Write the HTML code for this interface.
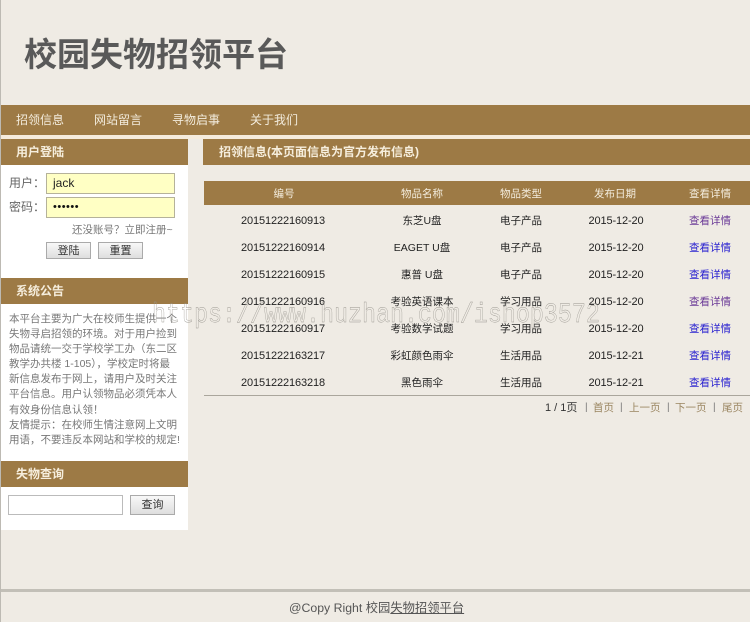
<!DOCTYPE html>
<html lang="zh"><head><meta charset="utf-8"><title>校园失物招领平台</title>
<style>
html,body{margin:0;padding:0}
body{width:750px;height:622px;position:relative;overflow:hidden;background:#efebe4;font-family:"Liberation Sans","Noto Sans CJK SC",sans-serif;font-size:12px;color:#222}
div,span,a{position:absolute;white-space:nowrap}
.bar{background:#9d7a45}
.h{color:#f6eedd;font-weight:bold;font-size:12px;line-height:26px}
.th{color:#f3ecdd;font-size:10.5px;line-height:25px;top:182px;text-align:center;transform:translateX(-50%)}
.nav{color:#f3ecdd;font-size:12px;line-height:30px;top:105px}
.c{text-align:center;line-height:20px;transform:translateX(-50%)}
.g{color:#666}
.inp{background:#ffffc4;border:1px solid #b5b29a;box-sizing:border-box;left:46px;width:129px;height:21px;line-height:19px;padding-left:6px;font-size:12px;color:#222}
.btn{background:linear-gradient(#f8f8f8,#dedede);border:1px solid #aaa;box-sizing:border-box;text-align:center;color:#333;font-size:11px}
.r{color:#222;font-size:10.5px}
.n{color:#222;font-size:11px;letter-spacing:-0.12px}
.lk{text-decoration:none;font-size:10.5px}
.p{color:#9a8560;font-size:10.5px;line-height:16px;top:400px}
.s{color:#777;font-size:10px;line-height:16px;top:400px}
</style></head><body>
<div style="left:0;top:0;width:1px;height:622px;background:#bdbab3"></div>
<div style="left:24px;top:33px;font-size:33px;font-weight:bold;color:#595959;line-height:44px">校园失物招领平台</div>

<div class="bar" style="left:1px;top:105px;width:749px;height:30px"></div>
<div style="left:1px;top:135px;width:749px;height:4px;background:#f5ebdc"></div>
<div class="nav" style="left:16px">招领信息</div>
<div class="nav" style="left:94px">网站留言</div>
<div class="nav" style="left:172px">寻物启事</div>
<div class="nav" style="left:250px">关于我们</div>

<div style="left:1px;top:139px;width:187px;height:391px;background:#fff"></div>
<div class="bar" style="left:1px;top:139px;width:187px;height:26px"></div>
<div class="h" style="left:16px;top:139px">用户登陆</div>
<div class="bar" style="left:203px;top:139px;width:547px;height:26px"></div>
<div class="h" style="left:219px;top:139px">招领信息(本页面信息为官方发布信息)</div>

<div class="g" style="left:9px;top:173px;line-height:20px;font-size:12px">用户：</div>
<div class="inp" style="top:173px">jack</div>
<div class="g" style="left:9px;top:197px;line-height:20px;font-size:12px">密码：</div>
<div class="inp" style="top:197px;font-size:11px;letter-spacing:0.5px;color:#111">••••••</div>
<div class="g" style="left:72px;top:222px;line-height:16px;font-size:10.5px;color:#777">还没账号？立即注册~</div>
<div class="btn" style="left:46px;top:242px;width:45px;height:17px;line-height:16px">登陆</div>
<div class="btn" style="left:98px;top:242px;width:45px;height:17px;line-height:16px">重置</div>

<div class="bar" style="left:1px;top:278px;width:187px;height:26px"></div>
<div class="h" style="left:16px;top:278px">系统公告</div>
<div style="left:9px;top:312px;width:176px;font-size:10.5px;line-height:15.1px;color:#777;white-space:normal">本平台主要为广大在校师生提供一个<br>失物寻启招领的环境。对于用户捡到<br>物品请统一交于学校学工办（东二区<br>教学办共楼 1-105），学校定时将最<br>新信息发布于网上，请用户及时关注<br>平台信息。用户认领物品必须凭本人<br>有效身份信息认领！<br>友情提示：在校师生情注意网上文明<br>用语，不要违反本网站和学校的规定!</div>

<div class="bar" style="left:1px;top:461px;width:187px;height:26px"></div>
<div class="h" style="left:16px;top:461px">失物查询</div>
<div style="left:8px;top:495px;width:115px;height:20px;box-sizing:border-box;background:#fff;border:1px solid #bbb"></div>
<div class="btn" style="left:130px;top:495px;width:45px;height:20px;line-height:19px">查询</div>

<div class="bar" style="left:204px;top:181px;width:546px;height:24px"></div>
<div class="th" style="left:284px">编号</div>
<div class="th" style="left:422px">物品名称</div>
<div class="th" style="left:521px">物品类型</div>
<div class="th" style="left:615px">发布日期</div>
<div class="th" style="left:710px">查看详情</div>

<div class="c n" style="left:283px;top:211px">20151222160913</div><div class="c r" style="left:422px;top:211px">东芝U盘</div><div class="c r" style="left:521px;top:211px">电子产品</div><div class="c n" style="left:616px;top:211px">2015-12-20</div><a class="c lk" style="left:710px;top:211px;color:#6b3a97">查看详情</a>
<div class="c n" style="left:283px;top:238px">20151222160914</div><div class="c r" style="left:422px;top:238px">EAGET U盘</div><div class="c r" style="left:521px;top:238px">电子产品</div><div class="c n" style="left:616px;top:238px">2015-12-20</div><a class="c lk" style="left:710px;top:238px;color:#2a22d0">查看详情</a>
<div class="c n" style="left:283px;top:265px">20151222160915</div><div class="c r" style="left:422px;top:265px">惠普 U盘</div><div class="c r" style="left:521px;top:265px">电子产品</div><div class="c n" style="left:616px;top:265px">2015-12-20</div><a class="c lk" style="left:710px;top:265px;color:#2a22d0">查看详情</a>
<div class="c n" style="left:283px;top:292px">20151222160916</div><div class="c r" style="left:422px;top:292px">考验英语课本</div><div class="c r" style="left:521px;top:292px">学习用品</div><div class="c n" style="left:616px;top:292px">2015-12-20</div><a class="c lk" style="left:710px;top:292px;color:#6b3a97">查看详情</a>
<div class="c n" style="left:283px;top:319px">20151222160917</div><div class="c r" style="left:422px;top:319px">考验数学试题</div><div class="c r" style="left:521px;top:319px">学习用品</div><div class="c n" style="left:616px;top:319px">2015-12-20</div><a class="c lk" style="left:710px;top:319px;color:#2a22d0">查看详情</a>
<div class="c n" style="left:283px;top:346px">20151222163217</div><div class="c r" style="left:422px;top:346px">彩虹颜色雨伞</div><div class="c r" style="left:521px;top:346px">生活用品</div><div class="c n" style="left:616px;top:346px">2015-12-21</div><a class="c lk" style="left:710px;top:346px;color:#2a22d0">查看详情</a>
<div class="c n" style="left:283px;top:373px">20151222163218</div><div class="c r" style="left:422px;top:373px">黑色雨伞</div><div class="c r" style="left:521px;top:373px">生活用品</div><div class="c n" style="left:616px;top:373px">2015-12-21</div><a class="c lk" style="left:710px;top:373px;color:#2a22d0">查看详情</a>

<div style="left:204px;top:395px;width:546px;height:1px;background:#aaa69c"></div>
<div style="left:545px;top:400px;font-size:11px;line-height:16px;color:#333">1 / 1页</div>
<div class="s" style="left:585px">|</div><div class="p" style="left:593px">首页</div>
<div class="s" style="left:620px">|</div><div class="p" style="left:629px">上一页</div>
<div class="s" style="left:667px">|</div><div class="p" style="left:675px">下一页</div>
<div class="s" style="left:713px">|</div><div class="p" style="left:722px">尾页</div>

<div style="left:152px;top:301px;font-family:'Liberation Mono',monospace;font-size:28px;line-height:30px;transform:scaleX(.833);transform-origin:0 0;color:transparent;-webkit-text-stroke:0.4px #9a9790">https://www.huzhan.com/ishop3572</div>

<div style="left:1px;top:589px;width:749px;height:3px;background:#c2bfb7"></div>
<div style="left:289px;top:600px;font-size:12.3px;line-height:17px;color:#555">@Copy Right 校园<span style="position:static;text-decoration:underline">失物招领平台</span></div>
</body></html>
